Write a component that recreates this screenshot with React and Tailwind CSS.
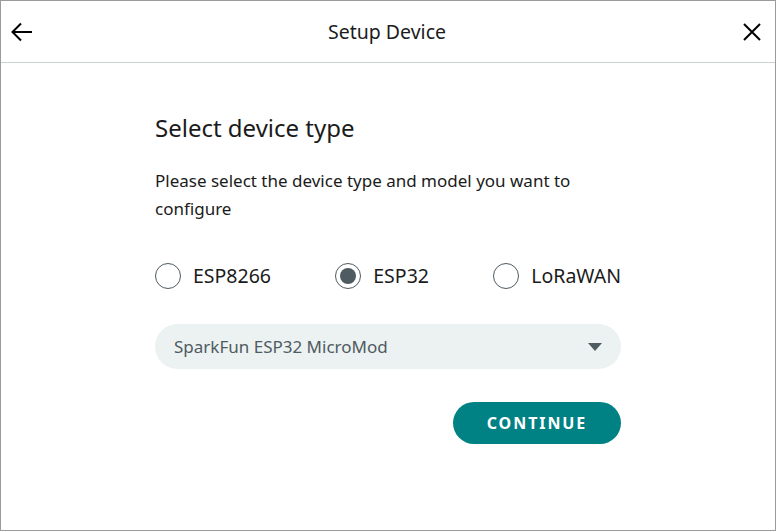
import React, { useState } from 'react';

const TYPES = ['ESP8266', 'ESP32', 'LoRaWAN'];

function Radio({ label, checked, onClick }) {
  return (
    <button onClick={onClick} className="flex items-center gap-3">
      <span className="w-[26px] h-[26px] rounded-full border-[1.5px] border-[#4e5b61] flex items-center justify-center">
        {checked && <span className="w-[16px] h-[16px] rounded-full bg-[#4e5b61]" />}
      </span>
      <span className="text-[19.5px] leading-[27px] text-[#1b1b1b]">{label}</span>
    </button>
  );
}

export default function App() {
  const [type, setType] = useState('ESP32');

  return (
    <div
      className="w-[776px] h-[531px] bg-white border border-[#9b9b9b] flex flex-col"
      style={{ fontFamily: '"Noto Sans", "Open Sans", sans-serif' }}
    >
      {/* Header */}
      <div className="h-[62px] shrink-0 flex items-center justify-between px-[9px] border-b border-[#c9d2d2]">
        <button className="w-[24px] h-[24px] flex items-center justify-center">
          <svg width="22" height="22" viewBox="0 0 22 22" fill="none" stroke="#000" strokeWidth="2">
            <path d="M21 11H2M10 2.5L1.5 11l8.5 8.5" />
          </svg>
        </button>
        <h1 className="text-[19.5px] leading-[28px] text-[#1b1b1b]">Setup Device</h1>
        <button className="w-[24px] h-[24px] flex items-center justify-center mr-[2px]">
          <svg width="18" height="18" viewBox="0 0 18 18" fill="none" stroke="#000" strokeWidth="2">
            <path d="M1 1l16 16M17 1L1 17" />
          </svg>
        </button>
      </div>

      {/* Body */}
      <div className="flex-1 flex justify-center">
        <div className="w-[466px] pt-[50px]">
          <h2 className="text-[24px] leading-[30px] text-[#1b1b1b]">Select device type</h2>
          <p className="mt-[24px] text-[17px] leading-[28px] text-[#1b1b1b]">
            Please select the device type and model you want to configure
          </p>
          <div className="mt-[39px] flex items-center justify-between">
            {TYPES.map((t) => (
              <Radio key={t} label={t} checked={type === t} onClick={() => setType(t)} />
            ))}
          </div>
          <div className="mt-[35px] h-[45px] rounded-full bg-[#ecf1f1] flex items-center justify-between pl-[19px] pr-[19px]">
            <span className="text-[17px] text-[#4e5b61]">SparkFun ESP32 MicroMod</span>
            <svg width="14" height="8" viewBox="0 0 14 8">
              <path d="M0 0h14L7 8z" fill="#4e5b61" />
            </svg>
          </div>
          <div className="mt-[33px] flex justify-end">
            <button className="w-[168px] h-[42px] rounded-full bg-[#008184] text-white text-[16px] font-bold tracking-[0.12em]">
              CONTINUE
            </button>
          </div>
        </div>
      </div>
    </div>
  );
}
